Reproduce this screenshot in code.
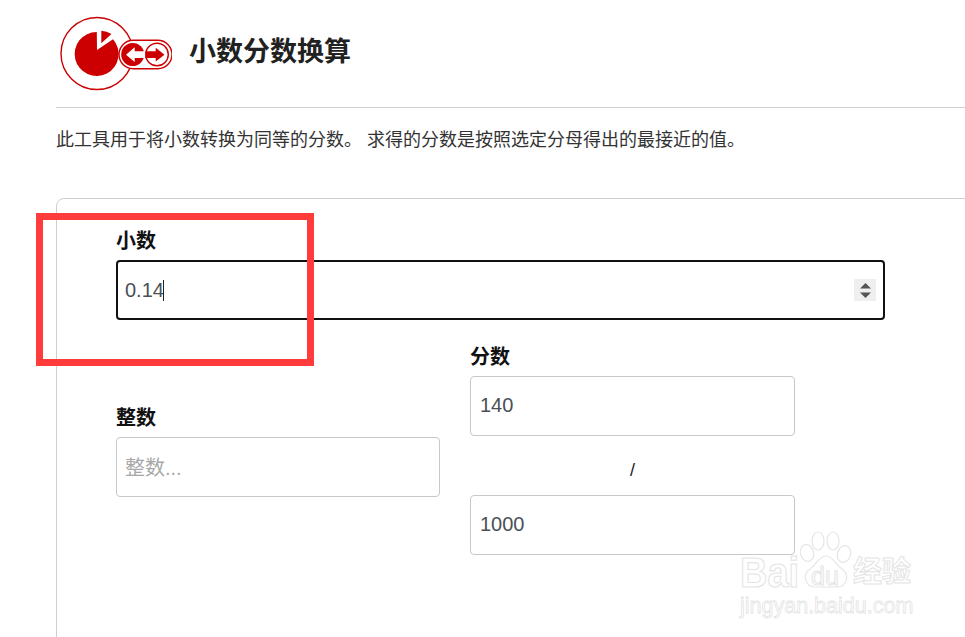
<template>
  <div class="page">
    <header class="head">
      <svg class="logo" width="116" height="92" viewBox="56 8 116 92">
        <circle cx="97" cy="53.500" r="36" fill="#fff" stroke="#cc0000" stroke-width="1.400" />
        <path d="M97 50 L96.800 32 A22 22 0 1 0 113 39.300 Z" fill="#cc0000" />
        <path d="M101.300 30.700 L101.300 43.300 L111.500 34 A24 24 0 0 0 101.300 30.700 Z" fill="#cc0000" />
        <rect x="119" y="40.300" width="53" height="28.400" rx="14.200" fill="#fff" stroke="#cc0000" stroke-width="1.400" />
        <circle cx="132.700" cy="54.500" r="11.500" fill="#cc0000" />
        <circle cx="157" cy="54.500" r="11.300" fill="#fff" stroke="#cc0000" stroke-width="1.400" />
        <path d="M126 54.700 L134.700 47.300 V51.300 H145.300 V58 H134.700 V62 Z" fill="#fff" />
        <path d="M164.500 54.700 L155.700 47.800 V51.300 H145.300 V58 H155.700 V61.500 Z" fill="#cc0000" />
      </svg>
      <h1 class="title">小数分数换算</h1>
    </header>
    <p class="intro">此工具用于将小数转换为同等的分数。 求得的分数是按照选定分母得出的最接近的值。</p>

    <section class="card">
      <label class="label">小数</label>
      <div class="field">
        <span class="value">0.14</span><span class="caret"></span>
        <span class="spin">
          <svg width="11" height="15" viewBox="0 0 11 15">
            <path d="M5.500 0 L11 5.500 H0 Z M5.500 15 L0 9.500 H11 Z" fill="#555" />
          </svg>
        </span>
      </div>

      <div class="cols">
        <div class="col whole">
          <label class="label">整数</label>
          <input class="input holder" placeholder="整数..." />
        </div>
        <div class="col">
          <label class="label">分数</label>
          <input class="input num" value="140" />
          <div class="slash">/</div>
          <input class="input num" value="1000" />
        </div>
      </div>
    </section>

    <div class="mark-box"></div>

    <div class="watermark">
      <div class="wm-row">
        <span class="wm-bai">Bai</span>
        <span class="wm-paw">
          <svg width="52" height="58" viewBox="0 0 52 58">
            <g fill="#fff" stroke="#e6e6e6" stroke-width="1.200">
              <ellipse cx="7" cy="23" rx="6.500" ry="8.500" transform="rotate(-18 7 23)" />
              <ellipse cx="18" cy="11" rx="6" ry="9" />
              <ellipse cx="33" cy="11" rx="6" ry="9" />
              <ellipse cx="44" cy="24" rx="6.500" ry="8.500" transform="rotate(18 44 24)" />
              <path d="M26 26 C19 26 17 34 10 39 C2 44 5 57 15 57 H37 C47 57 50 44 42 39 C35 34 33 26 26 26 Z" />
            </g>
          </svg>
          <span class="wm-du">du</span>
        </span>
        <span class="wm-jy">经验</span>
      </div>
      <div class="wm-url">jingyan.baidu.com</div>
    </div>
  </div>
</template>

<style>
html, body { margin: 0; background: #fff; overflow: hidden; }
</style>

<style scoped>
.page {
  position: relative;
  width: 965px;
  height: 637px;
  overflow: hidden;
  padding-left: 56px;
  box-sizing: border-box;
  font-family: "Liberation Sans", "Noto Sans CJK SC", sans-serif;
  color: #212121;
  background: #fff;
}
.head {
  height: 107px;
  border-bottom: 1px solid #cfcfcf;
  display: flex;
  align-items: center;
  margin-right: -20px;
}
.logo { flex: none; align-self: flex-start; margin-top: 8px; margin-right: 17px; }
.title {
  margin: 0 0 4px;
  font-size: 27px;
  line-height: 34px;
  font-weight: 700;
}
.intro {
  margin: 21px 0 0;
  font-size: 18px;
  line-height: 22px;
  color: #333;
  white-space: nowrap;
}
.card {
  margin-top: 47px;
  margin-right: -20px;
  height: 500px;
  border: 1px solid #cfcfcf;
  border-radius: 8px 0 0 0;
  padding: 29px 0 0 59px;
}
.label {
  display: block;
  font-size: 20px;
  line-height: 26px;
  font-weight: 700;
  color: #111;
  margin-bottom: 6px;
}
.field {
  box-sizing: border-box;
  width: 769px;
  height: 60px;
  border: 2px solid #111;
  border-radius: 4px;
  display: flex;
  align-items: center;
  padding: 0 7px 0 7px;
  font-size: 20px;
}
.value { color: #495057; }
.caret { width: 1px; height: 21px; background: #222; margin-left: -1px; }
.spin {
  margin-left: auto;
  width: 22px;
  height: 22px;
  background: #efefef;
  display: flex;
  align-items: center;
  justify-content: center;
}
.cols { display: flex; gap: 30px; margin-top: 24px; }
.col { width: 325px; }
.whole { width: 324px; padding-top: 61px; }
.input {
  display: block;
  box-sizing: border-box;
  width: 100%;
  height: 60px;
  border: 1px solid #c8c8c8;
  border-radius: 4px;
  padding: 0 8px;
  font: inherit;
  font-size: 20px;
  color: #495057;
  outline: none;
  background: #fff;
}
.holder { padding-top: 2px; }
.num { padding-left: 9px; padding-bottom: 2px; }
.input::placeholder { color: #a8a8a8; opacity: 1; }
.slash {
  height: 59px;
  line-height: 68px;
  text-align: center;
  font-size: 18px;
  color: #222;
}
.mark-box {
  position: absolute;
  left: 36px;
  top: 213px;
  width: 278px;
  height: 153px;
  box-sizing: border-box;
  border: 7px solid #ff3b3b;
}
.watermark {
  position: absolute;
  left: 740px;
  top: 530px;
  width: 190px;
  color: #fff;
  -webkit-text-stroke: 1px #e4e4e4;
}
.wm-row { display: flex; align-items: flex-end; height: 58px; }
.wm-bai {
  width: 60px;
  flex: none;
  font-size: 38px;
  font-weight: 700;
  line-height: 28px;
  transform: scaleY(1.100);
  transform-origin: bottom;
}
.wm-paw {
  position: relative;
  width: 52px;
  height: 58px;
  flex: none;
}
.wm-du {
  position: absolute;
  left: 11px;
  top: 34px;
  font-size: 25px;
  line-height: 24px;
}
.wm-jy {
  font-size: 29px;
  line-height: 32px;
  font-weight: 700;
  margin-left: 1px;
  white-space: nowrap;
}
.wm-url {
  font-size: 21.500px;
  line-height: 22px;
  margin-top: 7px;
  white-space: nowrap;
  -webkit-text-stroke: 0.800px #e4e4e4;
}
</style>
